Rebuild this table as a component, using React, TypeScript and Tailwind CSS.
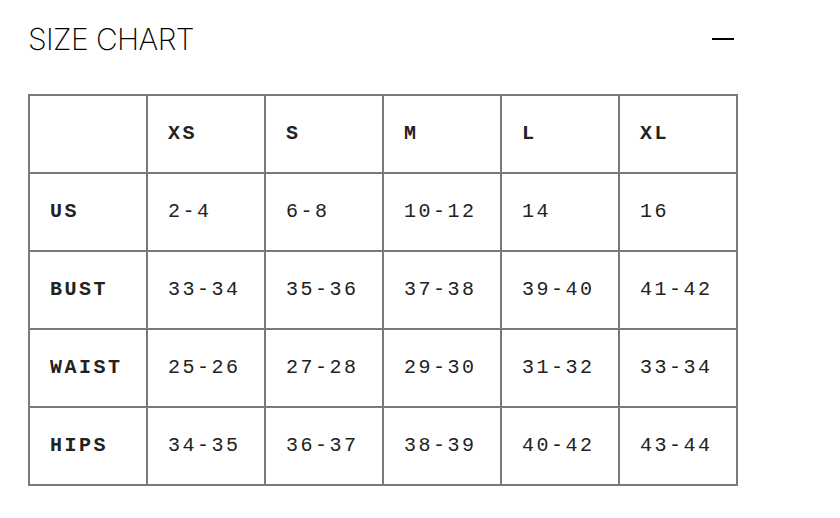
const HEAD = ['', 'XS', 'S', 'M', 'L', 'XL'];

const ROWS: [string, string[]][] = [
  ['US', ['2-4', '6-8', '10-12', '14', '16']],
  ['BUST', ['33-34', '35-36', '37-38', '39-40', '41-42']],
  ['WAIST', ['25-26', '27-28', '29-30', '31-32', '33-34']],
  ['HIPS', ['34-35', '36-37', '38-39', '40-42', '43-44']],
];

export default function App() {
  return (
    <div className="w-[840px] h-[518px] bg-white pl-7 pt-[19px]">
      {/* header */}
      <div className="flex items-center w-[710px] h-[40px]">
        <h2
          className="text-[30px] leading-none font-extralight tracking-[-0.6px] text-black"
          style={{ fontFamily: 'Inter, sans-serif' }}
        >
          SIZE CHART
        </h2>
        <span className="ml-auto mr-[4px] block w-[22px] h-[2px] bg-black" />
      </div>

      <table
        className="mt-[35px] w-[710px] table-fixed border-collapse text-[20px] tracking-[2.5px] text-[#222]"
        style={{ fontFamily: '"Liberation Mono", "Courier New", monospace' }}
      >
        <tbody>
          <tr className="h-[78px]">
            {HEAD.map((h, i) => (
              <td key={i} className="border-2 border-[#7a7a7a] pl-5 font-bold align-middle">
                {h}
              </td>
            ))}
          </tr>
          {ROWS.map(([label, vals]) => (
            <tr key={label} className="h-[78px]">
              <td className="border-2 border-[#7a7a7a] pl-5 font-bold align-middle">{label}</td>
              {vals.map((v, i) => (
                <td key={i} className="border-2 border-[#7a7a7a] pl-5 align-middle">
                  {v}
                </td>
              ))}
            </tr>
          ))}
        </tbody>
      </table>
    </div>
  );
}
